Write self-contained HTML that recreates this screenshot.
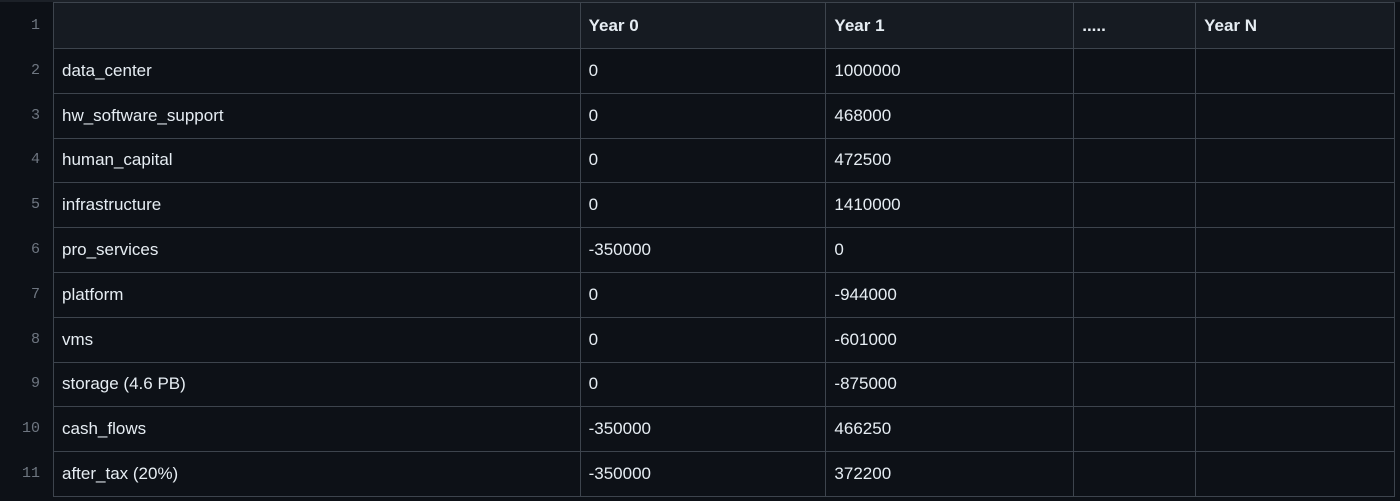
<!DOCTYPE html><html><head><style>
body{margin:0;background:#0d1117;width:1400px;height:501px;overflow:hidden;font-family:"Liberation Sans",sans-serif;}
.n{position:absolute;width:40px;text-align:right;color:#6e7681;font-family:"Liberation Mono",monospace;font-size:15px;line-height:18px;}
table{position:absolute;left:53px;top:2px;border-collapse:collapse;width:1342px;}
td{border:1px solid #3d444d;height:44.8px;padding:0 0 0 8px;color:#e6edf3;font-size:17px;box-sizing:border-box;}
tr:first-child td{background:#161b22;font-weight:bold;height:46px;}
</style></head><body>
<div style="position:absolute;left:0;top:0;width:1400px;height:2px;background:#1c2128"></div>
<div class="n" style="top:17px">1</div><div class="n" style="top:62px">2</div><div class="n" style="top:107px">3</div><div class="n" style="top:151px">4</div><div class="n" style="top:196px">5</div><div class="n" style="top:241px">6</div><div class="n" style="top:286px">7</div><div class="n" style="top:331px">8</div><div class="n" style="top:375px">9</div><div class="n" style="top:420px">10</div><div class="n" style="top:465px">11</div>
<table>
<colgroup><col style="width:527px"><col style="width:246px"><col style="width:248px"><col style="width:122px"><col style="width:199px"></colgroup>
<tr><td></td><td>Year 0</td><td>Year 1</td><td>.....</td><td>Year N</td></tr>
<tr><td>data_center</td><td>0</td><td>1000000</td><td></td><td></td></tr>
<tr><td>hw_software_support</td><td>0</td><td>468000</td><td></td><td></td></tr>
<tr><td>human_capital</td><td>0</td><td>472500</td><td></td><td></td></tr>
<tr><td>infrastructure</td><td>0</td><td>1410000</td><td></td><td></td></tr>
<tr><td>pro_services</td><td>-350000</td><td>0</td><td></td><td></td></tr>
<tr><td>platform</td><td>0</td><td>-944000</td><td></td><td></td></tr>
<tr><td>vms</td><td>0</td><td>-601000</td><td></td><td></td></tr>
<tr><td>storage (4.6 PB)</td><td>0</td><td>-875000</td><td></td><td></td></tr>
<tr><td>cash_flows</td><td>-350000</td><td>466250</td><td></td><td></td></tr>
<tr><td>after_tax (20%)</td><td>-350000</td><td>372200</td><td></td><td></td></tr>
</table>
</body></html>
